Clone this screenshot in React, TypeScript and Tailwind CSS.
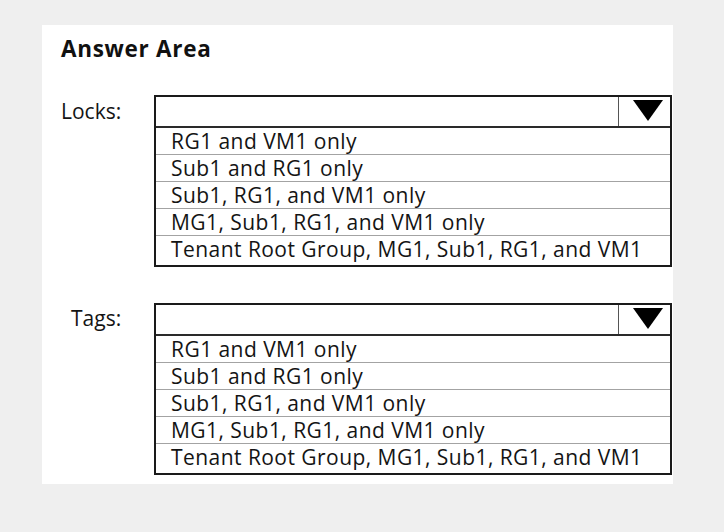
import React from 'react';

const options = [
  'RG1 and VM1 only',
  'Sub1 and RG1 only',
  'Sub1, RG1, and VM1 only',
  'MG1, Sub1, RG1, and VM1 only',
  'Tenant Root Group, MG1, Sub1, RG1, and VM1',
];

function Dropdown({ label, labelClass }: { label: string; labelClass: string }) {
  return (
    <div className="flex items-start">
      <div className={labelClass}>{label}</div>
      <div className="w-[518px] border-2 border-[#1a1a1a] bg-white">
        <div className="flex h-[31px] border-b-2 border-[#2a2a2a]">
          <div className="flex-1" />
          <div className="w-[52px] border-l border-[#555] flex items-start justify-end pt-[3px] pr-[7px]">
            <svg width="30" height="21" viewBox="0 0 30 21">
              <polygon points="0,0 30,0 15,21" fill="#000" />
            </svg>
          </div>
        </div>
        {options.map((o, i) => (
          <div
            key={o}
            className={
              'pl-[15px] text-[21px] tracking-[0.45px] leading-[27px] text-[#141414] whitespace-nowrap overflow-hidden ' +
              (i < options.length - 1 ? 'h-[27px] border-b border-[#a3a3a3]' : 'h-[29px]')
            }
          >
            {o}
          </div>
        ))}
      </div>
    </div>
  );
}

export default function App() {
  return (
    <div className="w-[724px] h-[532px] bg-[#efefef] pt-[25px] pl-[42px]" style={{ fontFamily: '"Open Sans", sans-serif' }}>
      <div className="w-[631px] h-[459px] bg-white pl-[19px] pt-[12px]">
        <div className="text-[22.5px] tracking-[0.7px] font-bold leading-[24px] text-[#111]">Answer Area</div>
        <div className="mt-[34px]">
          <Dropdown label="Locks:" labelClass="w-[93px] pt-[4px] text-[21px] leading-[24px] text-[#141414]" />
        </div>
        <div className="mt-[36px]">
          <Dropdown label="Tags:" labelClass="w-[93px] pl-[10px] pt-[3px] text-[21px] leading-[24px] text-[#141414]" />
        </div>
      </div>
    </div>
  );
}
